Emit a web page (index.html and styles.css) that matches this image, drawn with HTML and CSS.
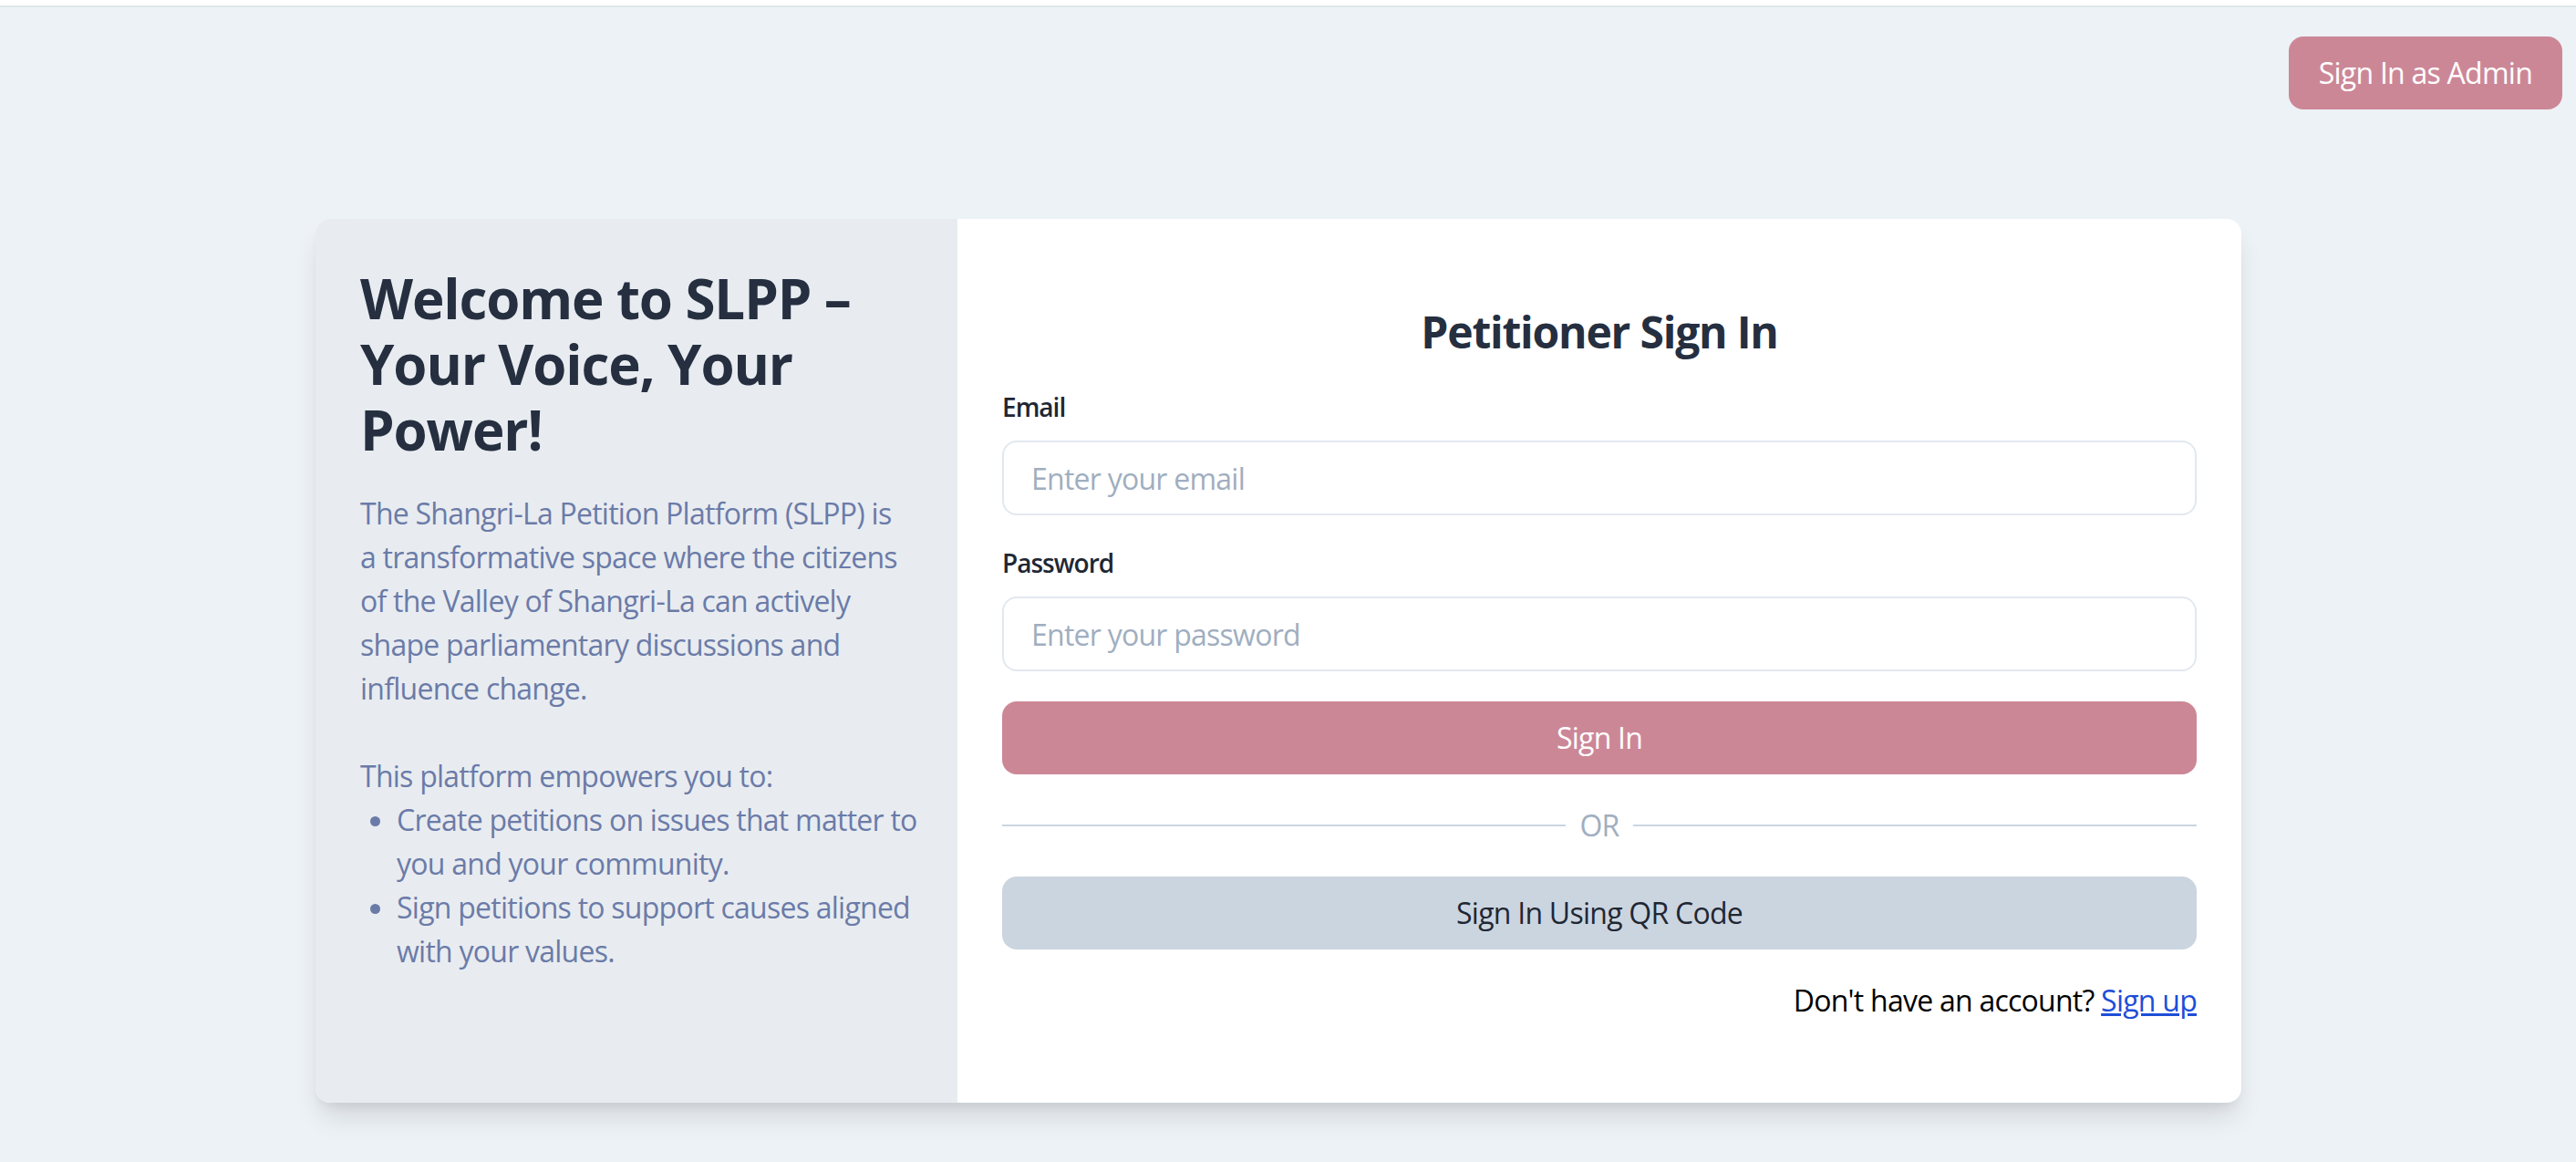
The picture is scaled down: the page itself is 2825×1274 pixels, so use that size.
FILE: index.html
```html
<!DOCTYPE html>
<html lang="en">
<head>
<meta charset="utf-8">
<title>SLPP – Petitioner Sign In</title>
<link rel="stylesheet" href="styles.css">
</head>
<body>
<div class="topbar"></div>
<div class="admin-bar">
  <button class="btn btn-pink btn-admin" type="button">Sign In as Admin</button>
</div>
<main class="page">
  <div class="card">
    <section class="intro">
      <h1 class="intro-title">Welcome to SLPP – Your Voice, Your Power!</h1>
      <p class="intro-text">The Shangri-La Petition Platform (SLPP) is a transformative space where the citizens of the Valley of Shangri-La can actively shape parliamentary discussions and influence change.</p>
      <p class="intro-lead">This platform empowers you to:</p>
      <ul class="intro-list">
        <li>Create petitions on issues that matter to you and your community.</li>
        <li>Sign petitions to support causes aligned with your values.</li>
      </ul>
    </section>
    <section class="signin">
      <h2 class="signin-title">Petitioner Sign In</h2>
      <form class="signin-form">
        <div class="field">
          <label class="field-label" for="email">Email</label>
          <input class="field-input" id="email" type="email" placeholder="Enter your email">
        </div>
        <div class="field">
          <label class="field-label" for="password">Password</label>
          <input class="field-input" id="password" type="password" placeholder="Enter your password">
        </div>
        <button class="btn btn-pink btn-block" type="button">Sign In</button>
        <div class="divider"><span class="divider-line"></span><span class="divider-text">OR</span><span class="divider-line"></span></div>
        <button class="btn btn-gray btn-block" type="button">Sign In Using QR Code</button>
        <p class="signup">Don't have an account? <a class="signup-link" href="#">Sign up</a></p>
      </form>
    </section>
  </div>
</main>
</body>
</html>
```
FILE: styles.css
```css
html, body {
  margin: 0;
  padding: 0;
}
body {
  background: #edf2f7;
  font-family: "Open Sans", "Noto Sans", sans-serif;
  font-size: 32px;
  line-height: 48px;
  letter-spacing: -0.75px;
  color: #1f2733;
  min-height: 1274px;
}
.topbar {
  height: 6px;
  background: #ffffff;
  border-bottom: 2px solid #e1e6e9;
}
.admin-bar {
  display: flex;
  justify-content: flex-end;
  padding: 32px 15px 0 0;
}
.btn {
  font-family: inherit;
  font-size: 32px;
  line-height: 48px;
  letter-spacing: -0.75px;
  border: none;
  border-radius: 16px;
  cursor: pointer;
  box-sizing: border-box;
}
.btn-pink {
  background: #cc8797;
  color: #ffffff;
}
.btn-gray {
  background: #cbd5e0;
  color: #1f2733;
}
.btn-admin {
  height: 80px;
  padding: 0 33px;
}
.btn-block {
  display: block;
  width: 100%;
  height: 80px;
  padding: 0 32px;
}
.page {
  display: flex;
  justify-content: center;
  padding: 120px 21px 0 0;
}
.card {
  width: 2112px;
  display: flex;
  border-radius: 16px;
  overflow: hidden;
  background: #ffffff;
  box-shadow: 0 20px 30px -6px rgba(0, 0, 0, 0.12), 0 8px 12px -4px rgba(0, 0, 0, 0.06);
}
.intro {
  width: 704px;
  flex: none;
  box-sizing: border-box;
  background: #e8ecf0;
  padding: 51px 56px 48px 49px;
}
.intro-title {
  margin: 0 0 32px;
  font-size: 60px;
  line-height: 72px;
  font-weight: 700;
  letter-spacing: -1.1px;
  color: #252f40;
}
.intro-text,
.intro-lead {
  margin: 0;
  color: #6b7ba8;
}
.intro-text {
  margin-bottom: 48px;
}
.intro-list {
  margin: 0 -24px 0 0;
  padding: 0 0 0 40px;
  list-style: disc;
  color: #6b7ba8;
}
.signin {
  flex: 1;
  box-sizing: border-box;
  padding: 92px 49px 88px 49px;
}
.signin-title {
  margin: 0 0 30px;
  text-align: center;
  font-size: 48px;
  line-height: 64px;
  font-weight: 700;
  letter-spacing: -1.2px;
  color: #252f40;
}
.field {
  margin-bottom: 32px;
}
.field-label {
  display: block;
  margin-bottom: 17px;
  font-size: 28px;
  line-height: 40px;
  font-weight: 600;
  letter-spacing: -1px;
  color: #1f2733;
}
.field-input {
  display: block;
  width: 100%;
  height: 82px;
  box-sizing: border-box;
  padding: 0 30px;
  border: 2px solid #e2e8f0;
  border-radius: 16px;
  font-family: inherit;
  font-size: 32px;
  letter-spacing: -0.75px;
  color: #1f2733;
  background: #ffffff;
  outline: none;
}
.field-input::placeholder {
  color: #a0aec0;
}
.field + .field {
  margin-bottom: 33px;
}
.divider {
  display: flex;
  align-items: center;
  margin: 32px 0;
  height: 48px;
}
.divider-line {
  flex: 1;
  height: 2px;
  background: #cbd5e0;
}
.divider-text {
  padding: 0 15px;
  color: #a0aec0;
}
.signup {
  margin: 32px 0 0;
  text-align: right;
  color: #000000;
}
.signup-link {
  color: #1d4ed8;
  text-decoration: underline;
}
```
